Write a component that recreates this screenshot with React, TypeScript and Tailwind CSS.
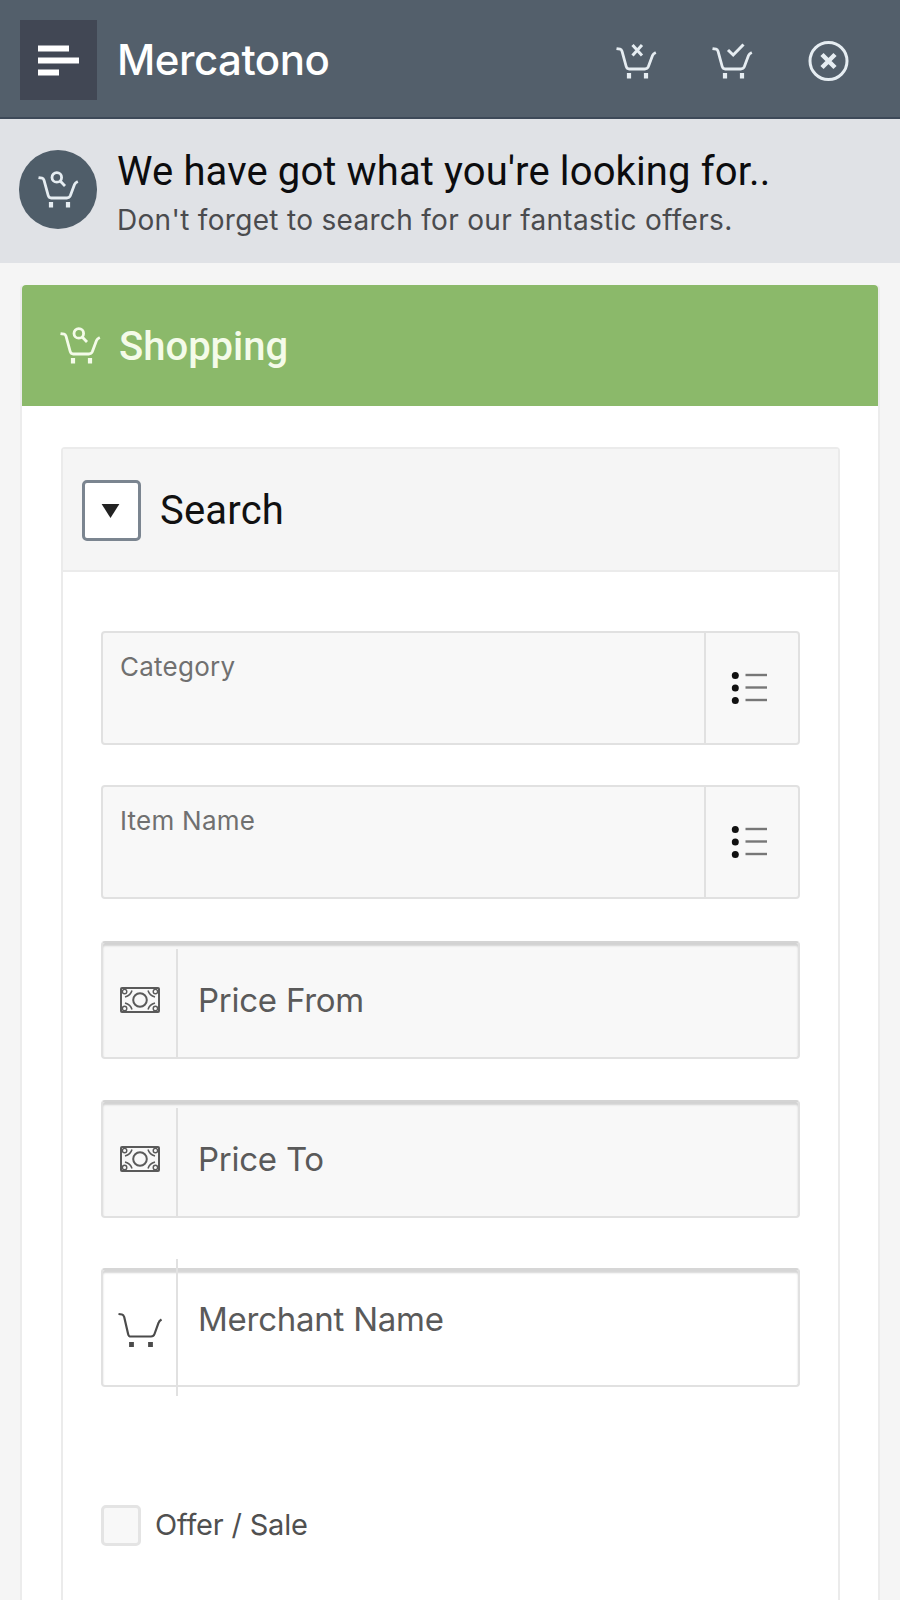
import type { ReactNode } from "react";

function Cart({ children }: { children?: ReactNode }) {
  return (
    <svg width="41" height="37" viewBox="0 -3 41 37" fill="none" stroke="currentColor" strokeWidth="2.8">
      <path d="M0.5 3.6L4.2 4.2C5.2 4.4 5.6 5 6 6.2L10.2 21.5C10.7 23.3 11.5 24 13.2 24H28.8C30.6 24 31.6 23.4 32.3 21.8L36.5 10.6C37 9.2 37.6 8.6 39.8 7.6" />
      <path d="M13 28V33.5M30 28V33.5" strokeWidth="4.2" />
      {children}
    </svg>
  );
}

function SearchCart() {
  return (
    <Cart>
      <circle cx="18.8" cy="3.4" r="4.8" />
      <path d="M22.2 7L27 12" strokeWidth="2.8" />
    </Cart>
  );
}

function MoneyIcon() {
  return (
    <svg width="40" height="26" viewBox="0 0 40 26" fill="none" stroke="#5a5a5a" strokeWidth="2">
      <rect x="1" y="1" width="38" height="24" rx="1" />
      <circle cx="4.6" cy="4.6" r="2.2" strokeWidth="1.4" />
      <circle cx="35.4" cy="4.6" r="2.2" strokeWidth="1.4" />
      <circle cx="4.6" cy="21.4" r="2.2" strokeWidth="1.4" />
      <circle cx="35.4" cy="21.4" r="2.2" strokeWidth="1.4" />
      <path d="M12 3.5C11 7 8.5 9 5 10M5 16C8.5 17 11 19 12 22.5" strokeWidth="1.5" />
      <path d="M28 3.5C29 7 31.5 9 35 10M35 16C31.5 17 29 19 28 22.5" strokeWidth="1.5" />
      <circle cx="20" cy="13" r="6.8" />
    </svg>
  );
}

function ListIcon() {
  return (
    <svg width="37" height="34" viewBox="0 0 37 34">
      {[4.5, 17, 29.5].map((y) => (
        <g key={y}>
          <circle cx="4.3" cy={y} r="3.5" fill="#111" />
          <path d={`M14.5 ${y - 0.5}H36`} stroke="#777" strokeWidth="2.4" />
        </g>
      ))}
    </svg>
  );
}

function PickerField({ label }: { label: string }) {
  return (
    <div className="flex h-[114px] rounded border-2 border-[#e1e1e1] bg-[#f8f8f8]">
      <div className="flex-1 pl-[17px] pt-[14px] text-[26px] leading-[40px] tracking-[0.25px] text-[#707070]">
        {label}
      </div>
      <button className="flex w-[94px] items-center justify-center border-l-2 border-[#e1e1e1] pr-[5px]">
        <ListIcon />
      </button>
    </div>
  );
}

function PriceField({ label }: { label: string }) {
  return (
    <div className="flex h-[118px] rounded border-2 border-[#e1e1e1] border-t-[#d4d4d4] bg-[#f8f8f8] shadow-[inset_0_3px_2px_#d2d2d2]">
      <div className="mt-1.5 flex w-[75px] justify-center border-r-2 border-[#e1e1e1] pt-[38px]">
        <MoneyIcon />
      </div>
      <div className="pl-[20px] pt-[33px] text-[33px] leading-[48px] tracking-[-0.25px] text-[#5a5a5a]">{label}</div>
    </div>
  );
}

export default function App() {
  return (
    <div
      className="flex h-[1600px] w-[900px] flex-col overflow-hidden whitespace-nowrap bg-[#f5f5f5]"
      style={{ fontFamily: "Inter, sans-serif" }}
    >
      <header className="flex h-[119px] shrink-0 items-start border-b-2 border-[#3d4958] bg-[#535f6b] pl-[20px] pr-[50px] pt-[20px] text-[#e6edf2]">
        <button className="flex h-[80px] w-[77px] items-center justify-center bg-[#414754]">
          <svg width="42" height="31" viewBox="0 0 42 31" stroke="white" strokeWidth="6">
            <path d="M0 3.5H31M0 15.5H41M0 27.5H21" />
          </svg>
        </button>
        <h1 className="ml-[20px] mt-[12px] text-[42px] font-medium leading-[56px] tracking-[-0.5px] text-white">
          Mercatono
        </h1>
        <div className="ml-auto flex h-[81px] items-center gap-[55px]">
          <Cart>
            <path d="M16.5 0L26 10.5M26 0L16.5 10.5" strokeWidth="3" />
          </Cart>
          <Cart>
            <path d="M16 5L21.2 10L31.5 -0.5" strokeWidth="3" />
          </Cart>
          <svg width="42" height="44" viewBox="0 0 42 44" fill="none" stroke="currentColor" strokeWidth="3">
            <circle cx="20.5" cy="22" r="18.5" />
            <path d="M14 15.5L27 28.5M27 15.5L14 28.5" strokeWidth="4.5" />
          </svg>
        </div>
      </header>

      <section className="flex h-[144px] shrink-0 bg-[#e0e2e6] pl-[19px] pt-[31px]">
        <div className="flex h-[79px] w-[78px] items-center justify-center rounded-full bg-[#4f5d69] text-[#e6edf2]">
          <SearchCart />
        </div>
        <div className="pl-[20px]">
          <h2
            className="mt-[-2px] text-[40px] leading-[48px] tracking-[0.13px] text-[#0c0c0e]"
            style={{ fontFamily: "Roboto, sans-serif" }}
          >
            We have got what you're looking for..
          </h2>
          <p className="text-[28px] leading-[48px] tracking-[0.31px] text-[#4a4b4e]">
            Don't forget to search for our fantastic offers.
          </p>
        </div>
      </section>

      <main className="mx-[20px] mt-[22px] flex flex-1 flex-col rounded-t border-x-2 border-[#ececec] bg-white">
        <div className="flex h-[121px] items-center rounded-t-sm bg-[#8bb96a] pl-[38px] text-[#f4fbe9]">
          <SearchCart />
          <h2
            className="ml-[18px] mt-[3px] text-[40px] font-medium leading-[56px]"
            style={{ fontFamily: "Roboto, sans-serif" }}
          >
            Shopping
          </h2>
        </div>

        <section className="ml-[39px] mr-[38px] mt-[41px] flex-1 rounded-t border-2 border-b-0 border-[#ebebeb]">
          <div className="flex h-[123px] items-center border-b-2 border-[#ebebeb] bg-[#f5f5f5] pl-[19px] pt-[2px]">
            <button className="flex h-[61px] w-[59px] items-center justify-center rounded-[5px] border-[3px] border-[#7b8590] bg-white pr-[2px]">
              <svg width="19" height="14" viewBox="0 0 19 15" fill="#222">
                <path d="M0 0H19L9.5 15Z" />
              </svg>
            </button>
            <h3
              className="ml-[19px] text-[40px] leading-[56px] tracking-[0.2px] text-[#111]"
              style={{ fontFamily: "Roboto, sans-serif" }}
            >
              Search
            </h3>
          </div>

          <div className="px-[38px] pt-[59px]">
            <PickerField label="Category" />
            <div className="h-[40px]" />
            <PickerField label="Item Name" />
            <div className="h-[42px]" />
            <PriceField label="Price From" />
            <div className="h-[41px]" />
            <PriceField label="Price To" />

            <div className="mt-[50px] flex h-[119px] rounded border-2 border-[#e1e1e1] border-t-[#d6d6d6] bg-white shadow-[inset_0_3px_2px_#d6d6d6]">
              <div className="-my-[11px] flex w-[75px] justify-center border-r-2 border-[#e1e1e1] pt-[53px]">
                <svg width="44" height="36" viewBox="0 0 44 36" fill="none" stroke="#4b4b4b" strokeWidth="2.2">
                  <path d="M0.5 2L4 2.5C5.4 2.8 5.7 3.5 6.2 5L10 21.5C10.5 24 11 24.5 13 24.5H33C35 24.5 35.8 24 36.5 22L40.5 11C41 9.5 41.5 8.7 43.5 7.5" />
                  <path d="M13.5 30V35M32.5 30V35" strokeWidth="4.8" />
                </svg>
              </div>
              <div className="pl-[20px] pt-[25px] text-[33px] leading-[48px] tracking-[-0.25px] text-[#5a5a5a]">
                Merchant Name
              </div>
            </div>

            <label className="mt-[118px] flex items-center gap-[14px] text-[29px] leading-[40px] tracking-[-0.2px] text-[#505050]">
              <span className="h-[41px] w-[40px] rounded-[5px] border-[3px] border-[#e4e4e4] bg-[#f8f8f8]" />
              <span className="-mt-[2px]">Offer / Sale</span>
            </label>
          </div>
        </section>
      </main>
    </div>
  );
}
